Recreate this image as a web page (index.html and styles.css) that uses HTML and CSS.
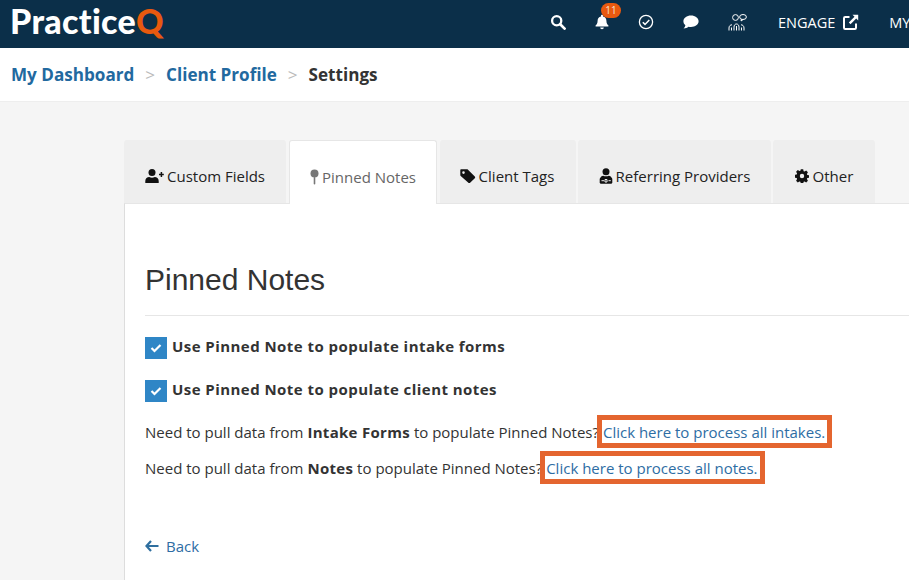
FILE: index.html
```html
<!DOCTYPE html>
<html lang="en">
<head>
<meta charset="utf-8">
<title>Settings</title>
<link rel="stylesheet" href="styles.css">
</head>
<body>
<header class="topbar">
  <div class="logo">Practice<span class="logo-q">Q</span></div>
  <nav class="topnav">
    <svg class="ic ic-search" viewBox="0 0 16 16"><circle cx="6.7" cy="6.7" r="4.6" fill="none" stroke="#fff" stroke-width="2.3"/><path d="M10.2 10.2L14.6 14.6" stroke="#fff" stroke-width="2.7" stroke-linecap="round"/></svg>
    <span class="bell">
      <svg class="ic ic-bell" viewBox="0 0 14 16"><path d="M7 .8c.6 0 1 .4 1 1v.6c2.200 .4 3.400 2.200 3.400 4.400 0 2.800 1 3.600 2 4.800.3.4 0 1-.5 1H1.100c-.5 0-.8-.6-.5-1 1-1.200 2-2 2-4.800 0-2.200 1.200-4 3.400-4.400v-.6c0-.6.4-1 1-1zM5.200 13.600h3.600c0 1-.8 1.700-1.800 1.700s-1.800-.7-1.800-1.700z" fill="#fff"/></svg>
      <span class="badge">11</span>
    </span>
    <svg class="ic ic-check" viewBox="0 0 16 16"><circle cx="8" cy="8" r="6.600" fill="none" stroke="#fff" stroke-width="1.300"/><path d="M4.800 8.200L7 10.400 11.300 5.900" fill="none" stroke="#fff" stroke-width="1.500"/></svg>
    <svg class="ic ic-chat" viewBox="0 0 16 14"><path d="M8 .6c4.200 0 7.600 2.500 7.600 5.700S12.200 12 8 12c-.9 0-1.700-.1-2.500-.3C4.300 12.800 2.600 13.400.6 13.400c1-1 1.600-2.100 1.800-3.200C1 9.200.4 7.800.4 6.300.4 3.100 3.800.6 8 .6z" fill="#fff"/></svg>
    <svg class="ic ic-people" viewBox="0 0 20 17" fill="none" stroke="#fff" stroke-width="1"><circle cx="7.500" cy="3.500" r="2.900"/><ellipse cx="15" cy="3" rx="3.400" ry="2.500"/><path d="M13.500 5.200l-.5 1.800 2.200-1.500"/><path d="M1 16.500v-2.500c0-2 1.300-3.200 3-3.200M6 16.500v-3.300c0-2 1-3.200 2.500-3.200s2.500 1.200 2.500 3.200v3.300M8.500 12v4.500M3.500 16.500v-3M13.500 16.500v-3M16 16.500v-2.500c0-2-1.300-3.200-3-3.200"/></svg>
    <a class="engage">ENGAGE
      <svg class="ic ic-ext" viewBox="0 0 16 16"><path d="M6.500 3H2.200C1.500 3 1 3.500 1 4.200v9.600c0 .7.500 1.200 1.200 1.200h9.600c.7 0 1.200-.5 1.200-1.200V9.500" fill="none" stroke="#fff" stroke-width="2"/><path d="M9.500.8h5.700v5.700l-2-2-5.700 5.700-1.700-1.700 5.700-5.700z" fill="#fff"/></svg>
    </a>
    <a class="my">MY</a>
  </nav>
</header>

<div class="crumbs">
  <a class="crumb">My Dashboard</a>
  <span class="sep">&gt;</span>
  <a class="crumb">Client Profile</a>
  <span class="sep">&gt;</span>
  <span class="crumb-current">Settings</span>
</div>

<main class="page">
  <div class="tabs">
    <a class="tab tab-fields">
      <svg class="ti" width="19" height="14" viewBox="0 0 19 14"><circle cx="7" cy="3.600" r="3.500" fill="#111"/><path d="M.3 14v-2c0-2.500 2-4 3.900-4 1 .5 1.800.7 2.800.7s1.800-.2 2.800-.7c1.900 0 3.900 1.500 3.900 4v2z" fill="#111"/><path d="M14 5.500h4.800M16.400 3.100v4.800" stroke="#111" stroke-width="1.500"/></svg>Custom Fields
    </a>
    <a class="tab tab-active">
      <svg class="ti" width="9" height="16" viewBox="0 0 9 16"><circle cx="4.500" cy="4.600" r="4" fill="#777"/><rect x="3.700" y="8" width="1.600" height="7.500" rx=".8" fill="#777"/></svg>Pinned Notes
    </a>
    <a class="tab tab-tags">
      <svg class="ti" width="16" height="14" viewBox="0 0 16 14"><path d="M.3 1.300C.3.700.7.300 1.300.300H7c.4 0 .7.100 1 .4l6.800 6.800c.5.500.5 1.200 0 1.700l-4.700 4.500c-.5.500-1.200.5-1.700 0L.7 6.900C.4 6.600.3 6.300.3 5.900zM3.500 2.300a1.300 1.300 0 1 0 0 2.600 1.300 1.300 0 0 0 0-2.600z" fill="#111" fill-rule="evenodd"/></svg>Client Tags
    </a>
    <a class="tab tab-ref">
      <svg class="ti" width="14" height="16" viewBox="0 0 14 16"><circle cx="7" cy="3.700" r="3.500" fill="#111"/><path d="M1.500 10c0-1.300 1.200-2.300 2.700-2.300 1.800.8 3.800.8 5.600 0 1.500 0 2.700 1 2.700 2.300z" fill="#111"/><rect x=".7" y="9.500" width="12.600" height="6.300" rx="1.500" fill="#111"/><path d="M2.500 12.700h2.600M6 11.500v2.500h2v-2.500zM9.500 12.700h2.300" stroke="#eee" stroke-width="1" fill="none"/></svg>Referring Providers
    </a>
    <a class="tab tab-other">
      <svg class="ti" width="14" height="14" viewBox="0 0 14 14"><path d="M5.800.3h2.400l.4 1.900 1 .4 1.600-1 1.700 1.700-1 1.600.4 1 1.900.400v2.400l-1.900.4-.4 1 1 1.600-1.700 1.700-1.600-1-1 .4-.4 1.900H5.800l-.4-1.900-1-.4-1.600 1-1.700-1.700 1-1.600-.4-1-1.900-.4V5.800l1.900-.4.400-1-1-1.600L2.800 1.100l1.600 1 1-.4zM7 4.800a2.200 2.200 0 1 0 0 4.400 2.200 2.200 0 0 0 0-4.400z" fill="#111" fill-rule="evenodd"/></svg>Other
    </a>
  </div>

  <section class="panel">
    <h1 class="title">Pinned Notes</h1>
    <div class="check-row">
      <span class="box"><svg width="12" height="10" viewBox="0 0 12 10"><path d="M1.500 5l3 3 6-6" fill="none" stroke="#fff" stroke-width="2.200"/></svg></span>
      <span class="check-label">Use Pinned Note to populate intake forms</span>
    </div>
    <div class="check-row check-row-2">
      <span class="box"><svg width="12" height="10" viewBox="0 0 12 10"><path d="M1.500 5l3 3 6-6" fill="none" stroke="#fff" stroke-width="2.200"/></svg></span>
      <span class="check-label">Use Pinned Note to populate client notes</span>
    </div>
    <p class="line line-1">Need to pull data from <b>Intake Forms</b> to populate Pinned Notes?<a class="hl">Click here to process all intakes.</a></p>
    <p class="line line-2">Need to pull data from <b>Notes</b> to populate Pinned Notes?<a class="hl">Click here to process all notes.</a></p>
    <a class="back"><svg width="14" height="12" viewBox="0 0 14 12"><path d="M6 1L1.500 6 6 11M2 6h11.500" fill="none" stroke="#2f6f9f" stroke-width="2.200"/></svg>Back</a>
  </section>
</main>
</body>
</html>
```
FILE: styles.css
```css
* { box-sizing: border-box; }
html, body { margin: 0; height: 100%; overflow: hidden; }
body { width: 909px; height: 580px; background: #f5f5f5; font-family: "Open Sans", sans-serif; color: #333; font-size: 14px; }

.topbar { height: 48px; background: #0b2f49; display: flex; align-items: flex-start; }
.logo { flex: none; margin-left: 10px; font-family: "Lato", sans-serif; font-weight: 900; font-size: 34px; line-height: 41px; letter-spacing: .3px; color: #fff; }
.logo-q { color: #e8590f; }
.topnav { margin-left: auto; display: flex; align-items: center; height: 44px; flex: none; width: 359px; color: #fff; overflow: hidden; }
.ic { display: block; flex: none; }
.ic-search { width: 16px; height: 16px; }
.bell { position: relative; display: block; width: 14px; height: 16px; margin-left: 29px; }
.ic-bell { width: 14px; height: 16px; }
.badge { position: absolute; left: 6px; top: -11px; width: 20px; height: 15px; border-radius: 8px; background: #e8590f; color: #f8e0d0; font-size: 10px; line-height: 15px; text-align: center; }
.ic-check { width: 16px; height: 16px; margin-left: 29px; }
.ic-chat { width: 16px; height: 14px; margin-left: 29px; }
.ic-people { width: 20px; height: 17px; margin-left: 29px; }
.engage { display: flex; align-items: center; gap: 8px; margin-left: 30px; font-size: 14.500px; }
.ic-ext { width: 16px; height: 16px; }
.my { margin-left: 30px; font-size: 14.500px; white-space: nowrap; }

.crumbs { height: 54px; background: #fff; border-bottom: 1px solid #eee; display: flex; align-items: center; padding: 0 0 1px 11px; font-weight: 700; font-size: 17.100px; }
.crumb { color: #22699f; }
.sep { color: #bbb; font-weight: 400; margin: 0 11px; }
.crumb-current { color: #333; }

.page { padding: 38px 0 0 124px; }
.tabs { display: flex; height: 63px; }
.tab { display: flex; align-items: center; justify-content: center; height: 63px; background: #eee; color: #222; border-radius: 3px 3px 0 0; font-size: 15px; padding-top: 8px; }
.ti { flex: none; margin-right: 3px; }
.tab-fields { width: 162px; }
.tab-active { width: 148px; margin-left: 3px; background: #fff; color: #666; border: 1px solid #e6e6e6; border-bottom: 0; }
.tab-tags { width: 136px; margin-left: 3px; padding-right: 2px; }
.tab-ref { width: 193px; margin-left: 2px; }
.tab-other { width: 102px; margin-left: 2px; }
.tab-other .ti { margin-right: 4px; }

.panel { background: #fff; border-left: 1px solid #ddd; height: 400px; padding: 0 0 0 20px; border-top: 1px solid #e6e6e6; }
.tab-active { position: relative; z-index: 1; height: 64px; margin-bottom: -1px; }
.title { margin: 0; padding-top: 58px; height: 112px; border-bottom: 1px solid #e6e6e6; font-family: "Liberation Sans", sans-serif; font-weight: 400; font-size: 30px; line-height: 36px; color: #333; }
.check-row { display: flex; align-items: flex-start; margin-top: 21px; height: 22px; }
.check-row-2 { margin-top: 21px; }
.box { width: 22px; height: 22px; background: #2f86c6; display: flex; align-items: center; justify-content: center; flex: none; }
.check-label { margin-left: 5px; font-weight: 700; font-size: 15px; line-height: 18px; letter-spacing: .45px; color: #333; }
.line { margin: 0; font-size: 15px; line-height: 21px; white-space: nowrap; color: #333; }
.line b { letter-spacing: .3px; }
.line-1 { margin-top: 19px; }
.line-2 { margin-top: 14px; }
.hl { color: #2e6da4; display: inline-block; margin-left: 4px; outline: 5px solid #e4652f; outline-offset: 1px; line-height: 20px; padding-top: 1px; background: #fff; padding-right: 1px; }
.back { display: flex; align-items: center; gap: 7px; margin-top: 57px; color: #2e6da4; font-size: 15px; line-height: 20px; }
```
